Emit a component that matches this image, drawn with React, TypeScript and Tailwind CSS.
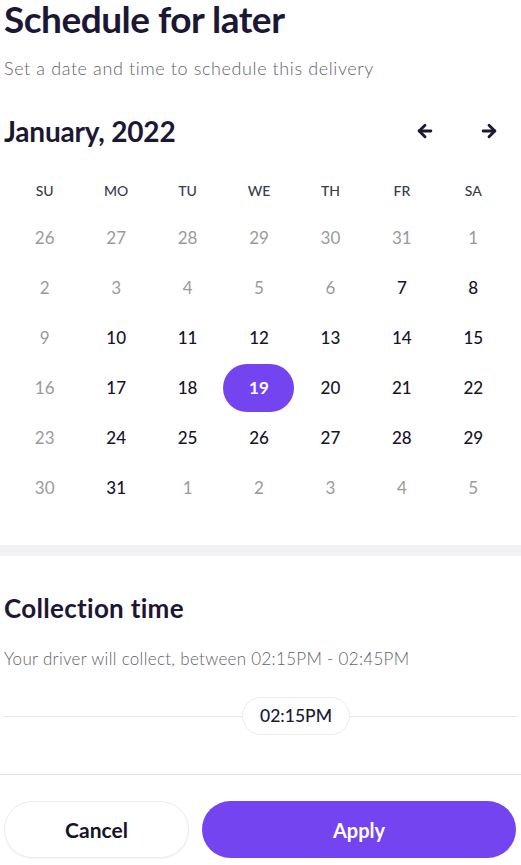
import { ArrowLeft, ArrowRight } from "lucide-react";

const weekDays = ["SU", "MO", "TU", "WE", "TH", "FR", "SA"];

type Day = { n: number; muted?: boolean; selected?: boolean };

const weeks: Day[][] = [
  [26, 27, 28, 29, 30, 31, 1].map((n) => ({ n, muted: true })),
  [2, 3, 4, 5, 6].map((n) => ({ n, muted: true } as Day)).concat([{ n: 7 }, { n: 8 }]),
  [{ n: 9, muted: true }, ...[10, 11, 12, 13, 14, 15].map((n) => ({ n }))],
  [
    { n: 16, muted: true },
    { n: 17 },
    { n: 18 },
    { n: 19, selected: true },
    { n: 20 },
    { n: 21 },
    { n: 22 },
  ],
  [{ n: 23, muted: true }, ...[24, 25, 26, 27, 28, 29].map((n) => ({ n }))],
  [
    { n: 30, muted: true },
    { n: 31 },
    ...[1, 2, 3, 4, 5].map((n) => ({ n, muted: true })),
  ],
];

const App = () => {
  return (
    <div
      className="w-[521px] h-[865px] bg-white overflow-hidden flex flex-col text-[#1b1734]"
      style={{ fontFamily: "Lato, 'Noto Sans', sans-serif" }}
    >
      {/* header */}
      <div className="pl-[4px]">
        <h1 className="text-[37px] font-bold leading-[36px] tracking-[-0.5px] pt-[1px]">
          Schedule for later
        </h1>
        <p className="text-[18px] tracking-[0.6px] text-[#636369] font-light leading-[20px] mt-[21px]">
          Set a date and time to schedule this delivery
        </p>
      </div>

      {/* month */}
      <div className="flex items-center mt-[38px] pl-[4px] pr-[20px] h-[30px]">
        <h2 className="text-[28px] font-bold leading-none flex-1 tracking-[-0.2px]">
          January, 2022
        </h2>
        <button className="w-[24px] flex justify-center mr-[40px]">
          <ArrowLeft size={20} strokeWidth={3.4} />
        </button>
        <button className="w-[24px] flex justify-center">
          <ArrowRight size={20} strokeWidth={3.4} />
        </button>
      </div>

      {/* calendar */}
      <div className="ml-[9px] w-[500px] mt-[21px]">
        <div className="grid grid-cols-7 h-[46px] items-center">
          {weekDays.map((d) => (
            <div key={d} className="text-center text-[14px] text-[#3a3a4a] font-medium">
              {d}
            </div>
          ))}
        </div>
        {weeks.map((week, i) => (
          <div key={i} className="grid grid-cols-7 h-[50px] items-center">
            {week.map((day, j) => (
              <div key={j} className="flex justify-center">
                {day.selected ? (
                  <span className="w-[71px] h-[48px] rounded-full bg-[#7444f0] text-white font-bold text-[17px] flex items-center justify-center">
                    {day.n}
                  </span>
                ) : (
                  <span
                    className={
                      day.muted
                        ? "text-[17px] text-[#9a9a9a]"
                        : "text-[17px] text-[#15132a] font-medium"
                    }
                  >
                    {day.n}
                  </span>
                )}
              </div>
            ))}
          </div>
        ))}
      </div>

      <div className="h-[11px] bg-[#f2f2f4] mt-[32px]" />

      {/* collection time */}
      <div className="pl-[4px]">
        <h2 className="text-[26px] tracking-[0.3px] font-bold leading-none mt-[39px]">
          Collection time
        </h2>
        <p className="text-[17px] tracking-[0.3px] text-[#636369] font-light mt-[28px] leading-[20px]">
          Your driver will collect, between 02:15PM - 02:45PM
        </p>
      </div>

      <div className="flex items-center mt-[28px] pl-[4px]">
        <div className="h-[1px] bg-[#e6e6e8] w-[238px]" />
        <div className="w-[108px] h-[38px] rounded-full border border-[#ececee] flex items-center justify-center text-[17.5px] font-medium">
          02:15PM
        </div>
        <div className="h-[1px] bg-[#e6e6e8] flex-1 mr-[4px]" />
      </div>

      <div className="h-[1px] bg-[#e4e4e6] mt-[39px]" />

      {/* actions */}
      <div className="flex gap-[13px] px-[4px] mt-[26px]">
        <button className="w-[185px] h-[57px] rounded-full border border-[#ececee] bg-white text-[21px] font-bold text-[#15132a] shadow-[0_1px_2px_rgba(0,0,0,0.05)]">
          Cancel
        </button>
        <button className="flex-1 mr-[1px] h-[57px] rounded-full bg-[#7444f0] text-[20px] font-bold text-white">
          Apply
        </button>
      </div>
    </div>
  );
};

export default App;
